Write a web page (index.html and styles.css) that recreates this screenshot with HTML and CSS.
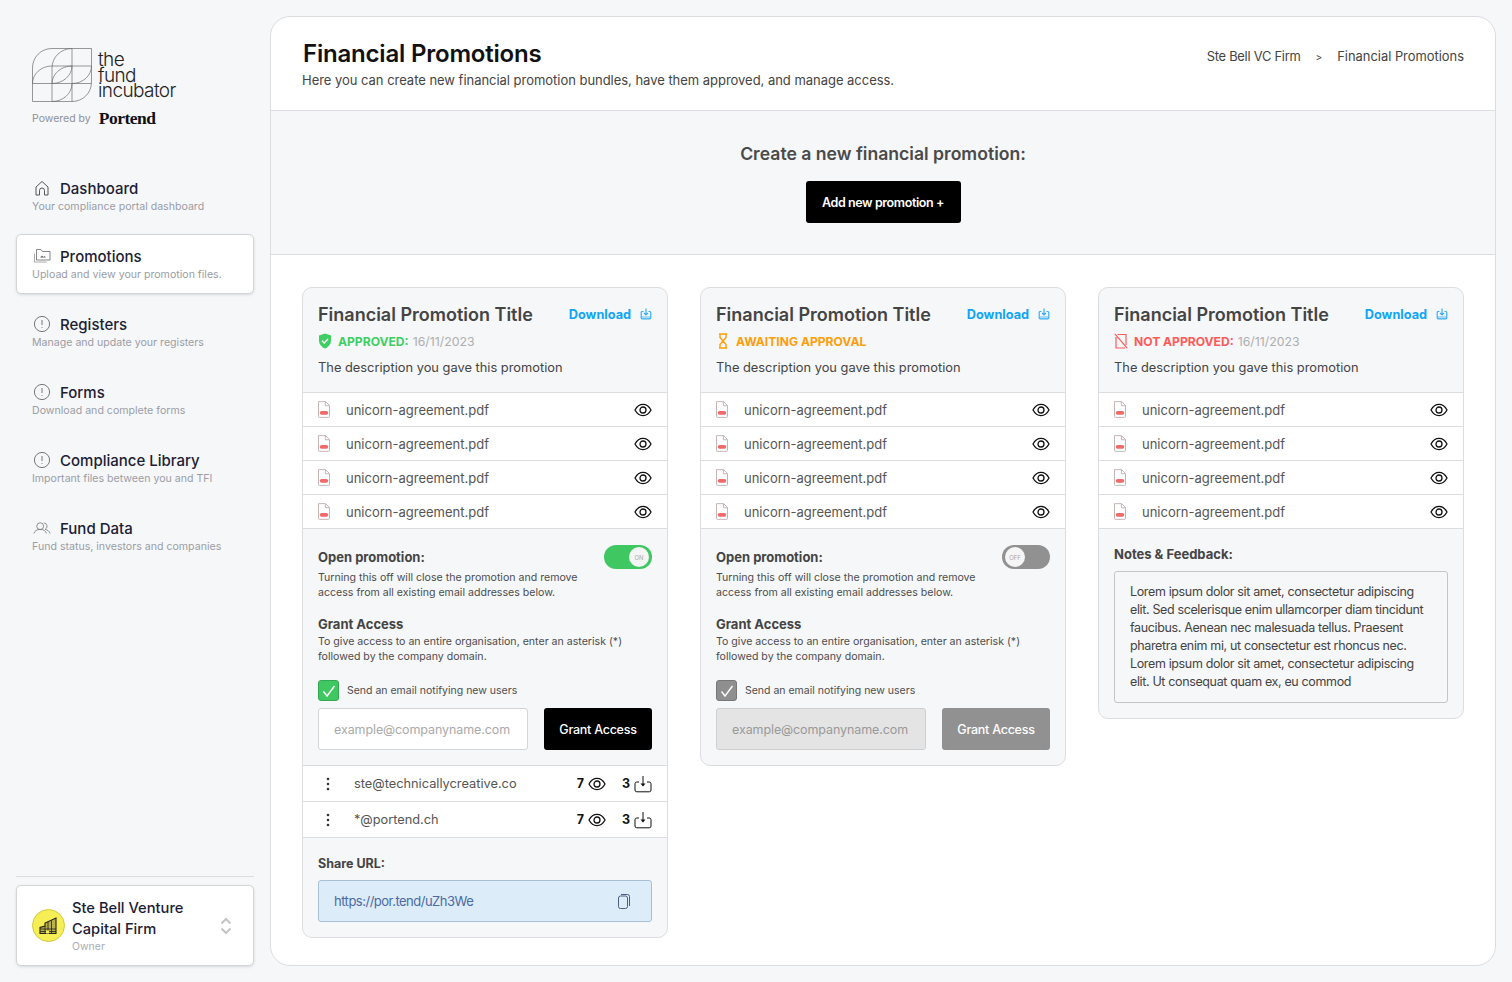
FILE: index.html
```html
<!DOCTYPE html>
<html>
<head>
    <title>Financial Promotions</title>
    <link rel="stylesheet" href="styles.css">
</head>
<body>
    <svg class="sprite" width="0" height="0">
        <symbol id="i-alert" viewBox="0 0 18 18">
            <circle cx="9" cy="9" r="7.6" fill="none" stroke="currentColor" stroke-width="1"/>
            <path d="M9 5v5M9 12.2v.8" fill="none" stroke="currentColor" stroke-width="1"/>
        </symbol>
        <symbol id="i-file" viewBox="1 .5 12.2 17">
            <path d="M1.500 1h7.200l4 4v11.200a.8.8 0 0 1-.8.8H2.300a.8.8 0 0 1-.8-.8z" fill="#fff" stroke="#c4b4b4"/>
            <path d="M8.500 1v4.200h4.200" fill="none" stroke="#c4b4b4"/>
            <rect x="2.800" y="10.500" width="8.600" height="3.800" rx="1.900" fill="#f06a6a"/>
        </symbol>
        <symbol id="i-eye" viewBox="0 0 18 14">
            <path d="M1 7c2-3.700 4.800-5.600 8-5.600S15 3.300 17 7c-2 3.700-4.800 5.600-8 5.600S3 10.700 1 7z" fill="none" stroke="currentColor" stroke-width="1.300"/>
            <circle cx="9" cy="7" r="3" fill="none" stroke="currentColor" stroke-width="1.300"/>
        </symbol>
        <symbol id="i-download" viewBox="0 0 12 12">
            <path d="M3.500 3.500H2.200a1 1 0 0 0-1 1v5.300a1 1 0 0 0 1 1h7.600a1 1 0 0 0 1-1V4.500a1 1 0 0 0-1-1H8.500" fill="none" stroke="currentColor" stroke-width="1.200"/>
            <path d="M6 .5v6.500M4 5l2 2 2-2" fill="none" stroke="currentColor" stroke-width="1.200"/>
            <path d="M1.500 8h9v2.500h-9z" fill="currentColor" opacity=".4"/>
        </symbol>
        <symbol id="i-tray" viewBox="0 0 18 18">
            <path d="M5 7H2.800A1.800 1.800 0 0 0 1 8.800V15a1.800 1.800 0 0 0 1.800 1.800h12.400A1.800 1.800 0 0 0 17 15V8.800A1.800 1.800 0 0 0 15.200 7H13" fill="none" stroke="currentColor"/>
            <path d="M9 1v9.500" fill="none" stroke="currentColor"/>
            <path d="M6.500 8.500h5L9 11.500z" fill="currentColor"/>
        </symbol>
        <symbol id="i-dots" viewBox="0 0 4 14">
            <circle cx="2" cy="2" r="1.300"/><circle cx="2" cy="7" r="1.300"/><circle cx="2" cy="12" r="1.300"/>
        </symbol>
    </svg>

    <div class="app">
        <aside class="sidebar">
            <div class="brand">
                <div class="logo">
                    <svg class="logo-mark" viewBox="0 0 60 54" width="60" height="54">
                        <g fill="none" stroke="#6d6d6d" stroke-width=".7">
                            <path d="M59.500 .5H20C9 .5.500 9 .500 20v33.500H40c11 0 19.500-8.500 19.500-19.500z"/>
                            <path d="M20 53.500V20C20 9 29 .5 40 .5v53M.5 35.500h59M20 18h39.500"/>
                            <path d="M.5 35.500C.5 26 9 18 20 18M20 35.500C20 26 29 18 40 18c0 9.500-9 17.500-20 17.500zM20 53.500c11 0 20-8 20-18M40 35.500c11 0 19.500-8 19.500-17.500"/>
                        </g>
                    </svg>
                    <div class="logo-text">the<br>fund<br>incubator</div>
                </div>
                <div class="powered">
                    <span>Powered by</span>
                    <b>Portend</b>
                </div>
            </div>

            <nav class="nav">
                <a class="nav-item">
                    <div class="nav-title">
                        <svg viewBox="0 0 18 18" width="18" height="18"><path d="M3 16V8l6-5.500L15 8v8h-3.500v-4.500a2.500 2.500 0 0 0-5 0V16z" fill="none" stroke="#555" stroke-width="1"/></svg>
                        Dashboard
                    </div>
                    <div class="nav-sub">Your compliance portal dashboard</div>
                </a>
                <a class="nav-item active">
                    <div class="nav-title">
                        <svg viewBox="0 0 18 18" width="18" height="18"><path d="M1.500 6.500v8.500h12" fill="none" stroke="#aaa"/><path d="M3.500 4.500V13h13.500V4.500H9.500L8 2.500H3.500z" fill="none" stroke="#666" stroke-width=".8"/><path d="M7 10.500l2-2 1.500 1.500 1-1 1.500 1.500z" fill="#666"/></svg>
                        Promotions
                    </div>
                    <div class="nav-sub">Upload and view your promotion files.</div>
                </a>
                <a class="nav-item">
                    <div class="nav-title"><svg width="18" height="18" class="nav-icon"><use href="#i-alert"/></svg>Registers</div>
                    <div class="nav-sub">Manage and update your registers</div>
                </a>
                <a class="nav-item">
                    <div class="nav-title"><svg width="18" height="18" class="nav-icon"><use href="#i-alert"/></svg>Forms</div>
                    <div class="nav-sub">Download and complete forms</div>
                </a>
                <a class="nav-item">
                    <div class="nav-title"><svg width="18" height="18" class="nav-icon"><use href="#i-alert"/></svg>Compliance Library</div>
                    <div class="nav-sub">Important files between you and TFI</div>
                </a>
                <a class="nav-item">
                    <div class="nav-title">
                        <svg viewBox="0 0 20 14" width="20" height="14" class="nav-icon"><g fill="none" stroke="currentColor" stroke-width=".9"><circle cx="8" cy="5" r="3.800"/><path d="M1 13c.8-2.800 3.500-4.500 7-4.500s6.200 1.700 7 4.500"/><path d="M12 1.300a3.800 3.800 0 0 1 1.500 7.200c2.500.5 4.500 2 5.500 4.500"/></g></svg>
                        Fund Data
                    </div>
                    <div class="nav-sub">Fund status, investors and companies</div>
                </a>
            </nav>

            <div class="org-wrap">
                <div class="org">
                    <div class="org-avatar">
                        <svg viewBox="0 0 20 18" width="20" height="18"><path d="M1 16.500v-6l5-1.500v-3l11-5v15.500z" fill="#b9b04a" stroke="#222" stroke-width="1.100"/><path d="M1 12h16M1 14.500h16M6 9v7.500M9 5v11.500M12.500 3.500v13" stroke="#222" stroke-width=".8" fill="none"/><rect x="7" y="13.500" width="3" height="3" fill="#f5ee55"/></svg>
                    </div>
                    <div class="org-info">
                        <div class="org-name">Ste Bell Venture<br>Capital Firm</div>
                        <div class="org-role">Owner</div>
                    </div>
                    <svg class="org-switch" viewBox="0 0 12 18" width="12" height="18"><path d="M1.500 6.500L6 2l4.500 4.500M1.500 11.500L6 16l4.500-4.500" fill="none" stroke="#c4c4c4" stroke-width="2"/></svg>
                </div>
            </div>
        </aside>

        <main class="main">
            <header class="page-head">
                <div>
                    <h1>Financial Promotions</h1>
                    <p>Here you can create new financial promotion bundles, have them approved, and manage access.</p>
                </div>
                <div class="crumbs">
                    <span class="crumb-first">Ste Bell VC Firm</span>
                    <span class="crumb-sep">&gt;</span>
                    <span>Financial Promotions</span>
                </div>
            </header>

            <section class="create">
                <h2>Create a new financial promotion:</h2>
                <button class="add-btn">Add new promotion +</button>
            </section>

            <section class="cards">
                <!-- approved -->
                <article class="card">
                    <div class="card-head">
                        <div class="card-title-row">
                            <h3>Financial Promotion Title</h3>
                            <a class="download">Download <svg width="12" height="12"><use href="#i-download"/></svg></a>
                        </div>
                        <div class="status approved">
                            <svg viewBox="0 0 14 16" width="14" height="16"><path d="M7 .5l6 2v5c0 3.800-2.500 6.500-6 8-3.500-1.500-6-4.200-6-8v-5z" fill="currentColor"/><path d="M4 7.800l2.200 2.200 3.800-4" fill="none" stroke="#fff" stroke-width="1.500"/></svg>
                            <b>APPROVED:</b> <span class="status-date">16/11/2023</span>
                        </div>
                        <p class="card-desc">The description you gave this promotion</p>
                    </div>
                    <ul class="files">
                        <li><svg width="12" height="17"><use href="#i-file"/></svg><span>unicorn-agreement.pdf</span><svg width="18" height="14"><use href="#i-eye"/></svg></li>
                        <li><svg width="12" height="17"><use href="#i-file"/></svg><span>unicorn-agreement.pdf</span><svg width="18" height="14"><use href="#i-eye"/></svg></li>
                        <li><svg width="12" height="17"><use href="#i-file"/></svg><span>unicorn-agreement.pdf</span><svg width="18" height="14"><use href="#i-eye"/></svg></li>
                        <li><svg width="12" height="17"><use href="#i-file"/></svg><span>unicorn-agreement.pdf</span><svg width="18" height="14"><use href="#i-eye"/></svg></li>
                    </ul>
                    <div class="card-body">
                        <div class="open-row">
                            <div>
                                <h4>Open promotion:</h4>
                                <p class="small">Turning this off will close the promotion and remove<br>access from all existing email addresses below.</p>
                            </div>
                            <div class="toggle on"><span>ON</span></div>
                        </div>
                        <h4 class="grant-title">Grant Access</h4>
                        <p class="small tiny">To give access to an entire organisation, enter an asterisk (*)<br>followed by the company domain.</p>
                        <div class="notify">
                            <span class="check"><svg viewBox="0 0 14 14" width="14" height="14"><path d="M1.500 7.500l3.500 4.500 7.500-10" fill="none" stroke="#fff" stroke-width="1.400"/></svg></span>
                            Send an email notifying new users
                        </div>
                        <div class="grant-row">
                            <div class="field">example@companyname.com</div>
                            <button class="grant-btn">Grant Access</button>
                        </div>
                    </div>
                    <ul class="users">
                        <li>
                            <svg class="dots" width="4" height="14"><use href="#i-dots"/></svg>
                            <span class="user-mail">ste@technicallycreative.co</span>
                            <b>7</b><svg class="user-eye" width="18" height="14"><use href="#i-eye"/></svg>
                            <b class="dl-count">3</b><svg class="user-tray" width="18" height="18"><use href="#i-tray"/></svg>
                        </li>
                        <li>
                            <svg class="dots" width="4" height="14"><use href="#i-dots"/></svg>
                            <span class="user-mail">*@portend.ch</span>
                            <b>7</b><svg class="user-eye" width="18" height="14"><use href="#i-eye"/></svg>
                            <b class="dl-count">3</b><svg class="user-tray" width="18" height="18"><use href="#i-tray"/></svg>
                        </li>
                    </ul>
                    <div class="share">
                        <h4>Share URL:</h4>
                        <div class="share-box">
                            <span>https://por.tend/uZh3We</span>
                            <svg viewBox="0 0 12 15" width="12" height="15"><rect x=".5" y="2" width="9" height="12.500" rx="2" fill="none" stroke="#4a5f80"/><path d="M3 .5h6.500a2 2 0 0 1 2 2v9.500" fill="none" stroke="#4a5f80"/></svg>
                        </div>
                    </div>
                </article>

                <!-- awaiting -->
                <article class="card disabled">
                    <div class="card-head">
                        <div class="card-title-row">
                            <h3>Financial Promotion Title</h3>
                            <a class="download">Download <svg width="12" height="12"><use href="#i-download"/></svg></a>
                        </div>
                        <div class="status awaiting">
                            <svg viewBox="0 0 14 16" width="14" height="16"><path d="M3 1h8M3 15h8M4 1v3.500L7 8l-3 3.500V15M10 1v3.500L7 8l3 3.500V15" fill="none" stroke="currentColor" stroke-width="1.400"/></svg>
                            <b>AWAITING APPROVAL</b>
                        </div>
                        <p class="card-desc">The description you gave this promotion</p>
                    </div>
                    <ul class="files">
                        <li><svg width="12" height="17"><use href="#i-file"/></svg><span>unicorn-agreement.pdf</span><svg width="18" height="14"><use href="#i-eye"/></svg></li>
                        <li><svg width="12" height="17"><use href="#i-file"/></svg><span>unicorn-agreement.pdf</span><svg width="18" height="14"><use href="#i-eye"/></svg></li>
                        <li><svg width="12" height="17"><use href="#i-file"/></svg><span>unicorn-agreement.pdf</span><svg width="18" height="14"><use href="#i-eye"/></svg></li>
                        <li><svg width="12" height="17"><use href="#i-file"/></svg><span>unicorn-agreement.pdf</span><svg width="18" height="14"><use href="#i-eye"/></svg></li>
                    </ul>
                    <div class="card-body">
                        <div class="open-row">
                            <div>
                                <h4>Open promotion:</h4>
                                <p class="small">Turning this off will close the promotion and remove<br>access from all existing email addresses below.</p>
                            </div>
                            <div class="toggle off"><span>OFF</span></div>
                        </div>
                        <h4 class="grant-title">Grant Access</h4>
                        <p class="small tiny">To give access to an entire organisation, enter an asterisk (*)<br>followed by the company domain.</p>
                        <div class="notify">
                            <span class="check"><svg viewBox="0 0 14 14" width="14" height="14"><path d="M1.500 7.500l3.500 4.500 7.500-10" fill="none" stroke="#fff" stroke-width="1.400"/></svg></span>
                            Send an email notifying new users
                        </div>
                        <div class="grant-row">
                            <div class="field">example@companyname.com</div>
                            <button class="grant-btn">Grant Access</button>
                        </div>
                    </div>
                </article>

                <!-- not approved -->
                <article class="card">
                    <div class="card-head">
                        <div class="card-title-row">
                            <h3>Financial Promotion Title</h3>
                            <a class="download">Download <svg width="12" height="12"><use href="#i-download"/></svg></a>
                        </div>
                        <div class="status rejected">
                            <svg viewBox="0 0 14 16" width="14" height="16"><path d="M3.500 1.500H12V12M11 15H2V4M.8.800l12.400 14.400" fill="none" stroke="currentColor" stroke-width="1.200"/></svg>
                            <b>NOT APPROVED:</b> <span class="status-date">16/11/2023</span>
                        </div>
                        <p class="card-desc">The description you gave this promotion</p>
                    </div>
                    <ul class="files">
                        <li><svg width="12" height="17"><use href="#i-file"/></svg><span>unicorn-agreement.pdf</span><svg width="18" height="14"><use href="#i-eye"/></svg></li>
                        <li><svg width="12" height="17"><use href="#i-file"/></svg><span>unicorn-agreement.pdf</span><svg width="18" height="14"><use href="#i-eye"/></svg></li>
                        <li><svg width="12" height="17"><use href="#i-file"/></svg><span>unicorn-agreement.pdf</span><svg width="18" height="14"><use href="#i-eye"/></svg></li>
                        <li><svg width="12" height="17"><use href="#i-file"/></svg><span>unicorn-agreement.pdf</span><svg width="18" height="14"><use href="#i-eye"/></svg></li>
                    </ul>
                    <div class="card-body notes">
                        <h4>Notes &amp; Feedback:</h4>
                        <div class="notes-box">Lorem ipsum dolor sit amet, consectetur adipiscing<br>elit. Sed scelerisque enim ullamcorper diam tincidunt<br>faucibus. Aenean nec malesuada tellus. Praesent<br>pharetra enim mi, ut consectetur est rhoncus nec.<br>Lorem ipsum dolor sit amet, consectetur adipiscing<br>elit. Ut consequat quam ex, eu commod</div>
                    </div>
                </article>
            </section>
        </main>
    </div>
</body>
</html>
```

FILE: styles.css
```css
* {
    box-sizing: border-box;
}

body {
    margin: 0;
    font-family: Inter, "Noto Sans", sans-serif;
    background-color: #f6f7f9;
    color: #444;
}

h1, h2, h3, h4, p, ul {
    margin: 0;
    padding: 0;
}

ul {
    list-style: none;
}

.sprite {
    position: absolute;
}

.app {
    display: flex;
    height: 982px;
    padding: 16px 16px 16px 0;
}

/* sidebar */

.sidebar {
    width: 270px;
    flex-shrink: 0;
    display: flex;
    flex-direction: column;
    padding: 0 16px;
}

.brand {
    padding: 32px 0 0 16px;
    height: 150px;
}

.logo {
    display: flex;
    align-items: flex-start;
}

.logo-text {
    margin: 4px 0 0 6px;
    font-weight: 300;
    font-size: 19px;
    line-height: 15.500px;
    letter-spacing: -.6px;
    color: #222;
}

.powered {
    display: flex;
    align-items: center;
    gap: 8px;
    margin-top: 6px;
    font-size: 10.500px;
    color: #8f9097;
    white-space: nowrap;
}

.powered b {
    font-family: "Liberation Serif", serif;
    font-size: 17.500px;
    letter-spacing: -.5px;
    color: #111;
}

.nav {
    display: flex;
    flex-direction: column;
    gap: 8px;
}

.nav-item {
    display: block;
    height: 60px;
    padding: 12px 15px 0;
    border: 1px solid transparent;
    border-radius: 5px;
}

.nav-item.active {
    background-color: #fff;
    border-color: #d4d5d8;
    box-shadow: 0 1px 3px rgba(0, 0, 0, 0.12);
}

.nav-title {
    display: flex;
    align-items: center;
    gap: 9px;
    height: 18px;
    padding-left: 1px;
    font-size: 15px;
    font-weight: 500;
    color: #1b2035;
    white-space: nowrap;
}

.nav-title svg {
    width: 18px;
    flex-shrink: 0;
}

.nav-icon {
    color: #777;
}

.nav-sub {
    margin-top: 3px;
    font-size: 10.600px;
    line-height: 14px;
    color: #9b9da5;
    white-space: nowrap;
}

.org-wrap {
    margin-top: auto;
    padding-top: 8px;
    border-top: 1px solid #dcdde0;
}

.org {
    display: flex;
    align-items: center;
    height: 81px;
    padding: 0 21px 0 15px;
    background-color: #fff;
    border: 1px solid #d4d5d8;
    border-radius: 5px;
    box-shadow: 0 1px 3px rgba(0, 0, 0, 0.12);
}

.org-avatar {
    display: flex;
    align-items: center;
    justify-content: center;
    width: 33px;
    height: 33px;
    flex-shrink: 0;
    background-color: #f5ee55;
    border: 1px solid #cfc93f;
    border-radius: 50%;
}

.org-info {
    flex: 1;
    margin-left: 7px;
}

.org-name {
    font-size: 14.700px;
    line-height: 21px;
    font-weight: 500;
    color: #1b2035;
    white-space: nowrap;
}

.org-role {
    font-size: 10.500px;
    color: #adaeb3;
}

/* main panel */

.main {
    flex: 1;
    background-color: #fff;
    border: 1px solid #dcdde0;
    border-radius: 20px;
    overflow: hidden;
}

.page-head {
    display: flex;
    justify-content: space-between;
    height: 94px;
    padding: 22px 31px 0 31px;
    border-bottom: 1px solid #dcdde0;
}

.page-head h1 {
    padding-left: 1px;
    font-size: 24px;
    line-height: 30px;
    font-weight: 600;
    letter-spacing: -.2px;
    color: #111;
}

.page-head p {
    margin-top: 2px;
    font-size: 13px;
    line-height: 18px;
    letter-spacing: -.03px;
    color: #444;
}

.crumbs {
    display: flex;
    align-items: flex-start;
    gap: 15px;
    padding-top: 9px;
    font-size: 12.900px;
    line-height: 18px;
    color: #444;
}

.crumb-first {
    letter-spacing: -.25px;
}

.crumb-sep {
    font-size: 10px;
}

.create {
    display: flex;
    flex-direction: column;
    align-items: center;
    height: 144px;
    padding-top: 32px;
    background-color: #f6f7f9;
    border-bottom: 1px solid #dcdde0;
}

.create h2 {
    font-size: 17.600px;
    line-height: 22px;
    font-weight: 600;
    color: #4a4a4a;
}

.add-btn {
    width: 155px;
    height: 42px;
    margin-top: 16px;
    background-color: #000;
    border: none;
    border-radius: 3px;
    font-family: inherit;
    font-size: 12.500px;
    font-weight: 600;
    letter-spacing: -.4px;
    color: #fff;
}

/* promotion cards */

.cards {
    display: grid;
    grid-template-columns: repeat(3, 366px);
    gap: 32px;
    align-items: start;
    padding: 32px 31px;
}

.card {
    background-color: #f6f7f9;
    border: 1px solid #dcdde0;
    border-radius: 10px;
    overflow: hidden;
}

.card-head {
    height: 105px;
    padding: 14px 15px 0;
    border-bottom: 1px solid #dcdde0;
}

.card-title-row {
    display: flex;
    justify-content: space-between;
    align-items: center;
    height: 24px;
}

.card-title-row h3 {
    font-size: 18px;
    font-weight: 600;
    white-space: nowrap;
}

.download {
    display: flex;
    align-items: center;
    gap: 9px;
    font-size: 12.700px;
    font-weight: 700;
    color: #0ea5f7;
    white-space: nowrap;
}

.download svg {
    color: #3aaef5;
}

.status {
    display: flex;
    align-items: center;
    gap: 4px;
    height: 18px;
    margin-top: 6px;
    font-size: 12.100px;
    white-space: nowrap;
}

.status b {
    margin-left: 2px;
    font-weight: 700;
}

.status-date {
    color: #aeaeae;
    font-size: 12.300px;
}

.approved {
    color: #3fce63;
}

.awaiting {
    color: #ff9d0a;
}

.rejected {
    color: #ff5a5a;
}

.card-desc {
    margin-top: 9px;
    font-size: 12.850px;
    line-height: 18px;
    color: #444;
    white-space: nowrap;
}

.files {
    background-color: #fff;
}

.files li {
    display: flex;
    align-items: center;
    height: 34px;
    padding: 0 15px;
    border-bottom: 1px solid #dcdde0;
    color: #111;
}

.files li span {
    flex: 1;
    margin-left: 16px;
    font-size: 13px;
    color: #555;
}

.card-body {
    padding: 16px 15px 15px;
}

.open-row {
    display: flex;
    justify-content: space-between;
    align-items: flex-start;
}

h4 {
    font-size: 13px;
    line-height: 24px;
    font-weight: 700;
    color: #444;
}

.small {
    margin-top: 1px;
    font-size: 10.600px;
    line-height: 15px;
    color: #4d4d4d;
    white-space: nowrap;
}

.tiny {
    margin-top: -2px;
}

.grant-title {
    margin-top: 12px;
}

.toggle {
    display: flex;
    align-items: center;
    width: 48px;
    height: 24px;
    padding: 3px;
    border-radius: 12px;
    font-size: 6px;
    color: #aaa;
}

.toggle span {
    display: flex;
    align-items: center;
    justify-content: center;
    width: 20px;
    height: 20px;
    background-color: #f5f5f5;
    border-radius: 50%;
}

.toggle.on {
    justify-content: flex-end;
    background-color: #3fc862;
}

.toggle.off {
    background-color: #919191;
}

.notify {
    display: flex;
    align-items: center;
    gap: 8px;
    height: 21px;
    margin-top: 16px;
    font-size: 10.500px;
    color: #4d4d4d;
    white-space: nowrap;
}

.check {
    display: flex;
    align-items: center;
    justify-content: center;
    width: 21px;
    height: 21px;
    background-color: #3fc862;
    border: 1px solid #34a853;
    border-radius: 3px;
}

.disabled .check {
    background-color: #8f8f8f;
    border-color: #777;
}

.grant-row {
    display: flex;
    gap: 16px;
    margin-top: 7px;
}

.field {
    display: flex;
    align-items: center;
    width: 210px;
    height: 42px;
    padding-left: 15px;
    background-color: #fff;
    border: 1px solid #d4d5d8;
    border-radius: 3px;
    font-size: 12.500px;
    letter-spacing: -.1px;
    color: #aaa;
    white-space: nowrap;
}

.disabled .field {
    background-color: #e4e4e4;
    border-color: #cfcfcf;
    color: #999;
}

.grant-btn {
    width: 108px;
    height: 42px;
    background-color: #000;
    border: none;
    border-radius: 3px;
    font-family: inherit;
    font-size: 12.500px;
    font-weight: 500;
    letter-spacing: -.25px;
    color: #fff;
}

.disabled .grant-btn {
    background-color: #919191;
}

.users {
    background-color: #fff;
    border-top: 1px solid #dcdde0;
}

.users li {
    display: flex;
    align-items: center;
    height: 36px;
    padding: 0 15px 0 23px;
    border-bottom: 1px solid #dcdde0;
    font-size: 12.500px;
    color: #111;
}

.users .dots {
    fill: #333;
}

.user-mail {
    flex: 1;
    margin-left: 24px;
    font-size: 12.800px;
    color: #555;
}

.users b {
    font-weight: 700;
}

.user-eye {
    margin-left: 4px;
}

.dl-count {
    margin-left: 16px;
}

.user-tray {
    margin-left: 4px;
}

.share {
    padding: 14px 15px 15px;
}

.share h4 {
    font-size: 12.500px;
}

.share-box {
    display: flex;
    justify-content: space-between;
    align-items: center;
    height: 42px;
    margin-top: 4px;
    padding: 0 21px 0 15px;
    background-color: #dcecf9;
    border: 1px solid #a8bfd6;
    border-radius: 3px;
    font-size: 13px;
    letter-spacing: -.5px;
    color: #4a6aa5;
}

.notes {
    padding-top: 13px;
}

.notes-box {
    margin-top: 5px;
    height: 132px;
    padding: 11px 15px;
    background-color: #f6f7f9;
    border: 1px solid #c4c5c8;
    border-radius: 3px;
    font-size: 12.500px;
    line-height: 18px;
    letter-spacing: -.36px;
    color: #444;
    white-space: nowrap;
}
```
